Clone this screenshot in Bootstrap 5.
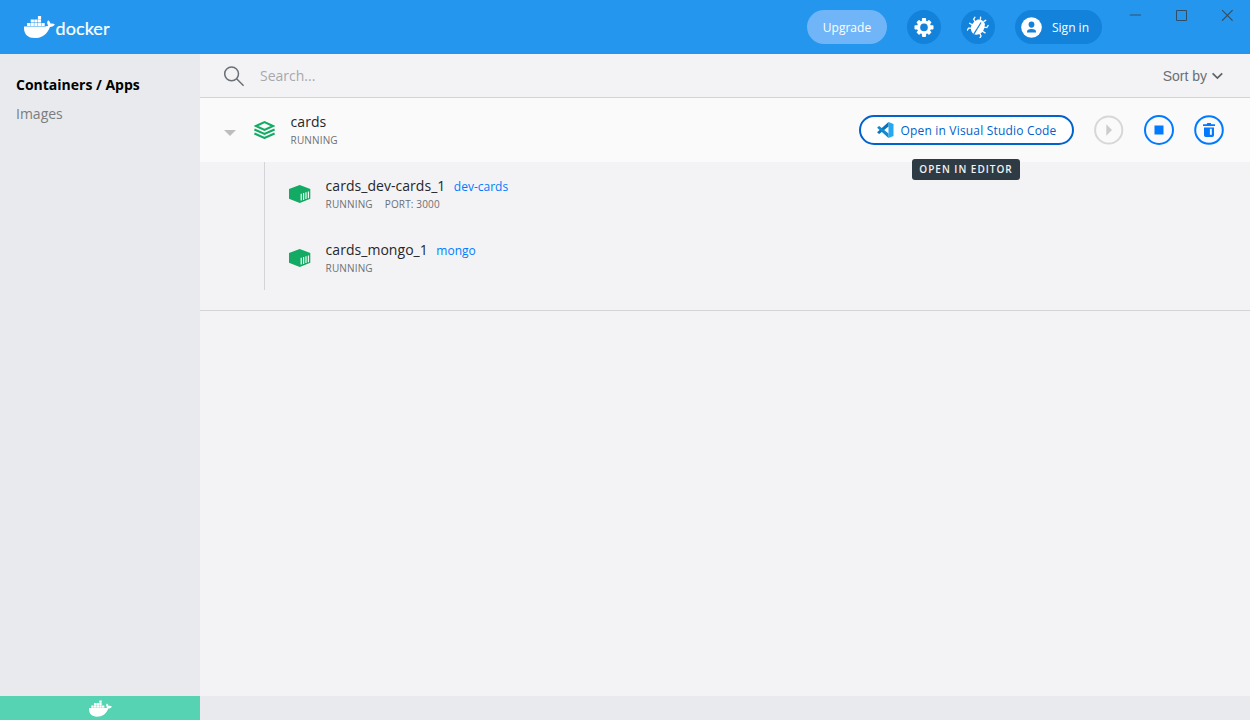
<!DOCTYPE html>
<html lang="en">
<head>
<meta charset="utf-8">
<meta name="viewport" content="width=device-width, initial-scale=1">
<title>Docker Dashboard</title>
<link href="https://cdn.jsdelivr.net/npm/bootstrap@5.3.0/dist/css/bootstrap.min.css" rel="stylesheet">
<style>
body{font-family:"Open Sans",sans-serif;font-size:14px;line-height:20px;background:#f3f3f6;color:#1c1e21;overflow:hidden}
svg{display:block;flex:none}
a{text-decoration:none}
.topbar{height:54px;background:#2496ed;padding:0 17px 0 24px}
.tools{gap:20px}
.pill{height:34px;border:0;border-radius:17px;background:#1282db;color:#fff;font-size:12px;font-weight:500;padding:1px 0 0;line-height:18px}
.pill.upgrade{width:80px;background:#70b5f8}
.pill.round{width:34px;padding:0}
.pill.signin{width:87px;padding:0 0 0 6px;gap:10px}
.pill.signin span{padding-top:1px}
.win{gap:34px;margin-left:27px;padding-top:9px}
.side{width:200px;background:#e8eaee}
.side nav{padding:21px 16px}
.side nav a{color:#7a7d80;line-height:20px;margin-bottom:9px}
.side nav a.active{color:#000;font-weight:700}
.searchbar{height:44px;border-bottom:1px solid #d3d4d7;padding:0 27px 0 23px}
.searchbar .lens{margin:1px 0 0 1px}
.searchbar input{border:0;background:none;padding:0;outline:0;width:300px;font-size:14px;margin-left:15px}
.searchbar input::placeholder{color:#a6a8ab;opacity:1}
.sort{font-family:"Liberation Sans",sans-serif;color:#6b6f73;gap:5px}
.group{border-bottom:1px solid #d3d4d7;padding-bottom:20px}
.ghead{height:64px;background:#fafafa;padding:0 26px 0 24px}
.ghead .caret{margin-top:5px}
.ghead .layers{margin-left:18px}
.ghead .names{margin:0 0 2px 15.6px}
.actions{gap:20px}
.ttl{font-size:14px;line-height:20px;color:#25272a;letter-spacing:.04px}
.sub{font-size:10px;line-height:14px;color:#6c7074;letter-spacing:.15px;gap:12px}
.ghead .sub{margin-top:1px}
.kids{margin-left:64px;border-left:1px solid #d3d4d7}
.kid{height:64px;padding-left:24px}
.kid .names{margin:0 0 2px 14.6px}
.kid a{font-size:12px;letter-spacing:0;color:#007bff;margin-left:8.5px}
.vsc{width:215px;height:30px;border:2px solid #0062cc;border-radius:15px;background:#fff;color:#0062cc;font-size:12px;font-weight:500;letter-spacing:.18px;padding:0;gap:7px}
.vsc span{padding-top:1px}
.tip{position:absolute;top:44px;left:53px;width:108px;height:21px;border-radius:3px;background:#2f3b44;color:#f2f3f4;font-size:10px;font-weight:600;letter-spacing:1px;line-height:21px;text-align:center;white-space:nowrap}
.foot{height:24px;background:#e8eaed}
.foot div{width:200px;background:#56d3b2}
</style>
</head>
<body class="vh-100 d-flex flex-column">
<svg width="0" height="0" class="position-absolute">
  <symbol id="whale" viewBox="0 0 31 22">
    <path d="M0 10.4H21.5C22.8 10.4 23.8 10 24.3 9.5C22.7 7.6 22.9 5.6 24.1 4.2C25.5 5.1 26.3 6.4 26.4 7.6C28 7.2 29.6 7.5 30.8 8.2C30 10.1 28.2 10.9 26 10.9C23.3 18.2 18 22 10.5 22C3.3 22 -.4 17.8 0 10.4Z"/>
    <path d="M3.1 7h3.2v3h-3.2zM6.7 7h3.2v3h-3.2zM10.3 7h3.2v3h-3.2zM13.9 7h3.2v3h-3.2zM17.5 7h3.2v3h-3.2zM6.7 3.6h3.2v3h-3.2zM10.3 3.6h3.2v3h-3.2zM13.9 3.6h3.2v3h-3.2zM13.9 .1h3.2v3.1h-3.2z"/>
  </symbol>
  <symbol id="box" viewBox="0 0 22 18">
    <path fill="#13aa63" d="M10.7 0L21.3 4V13.8L10.7 18L0 13.8V4Z"/>
    <path fill="none" stroke="#eefaf4" stroke-width="1.2" d="M12.2 8.7V15.6M14.6 8V14.9M17 7.2V14.1M19.4 6.4V13.3"/>
  </symbol>
</svg>

<header class="topbar d-flex flex-shrink-0 align-items-center">
  <svg width="88" height="24" viewBox="0 0 88 24" fill="#fff">
    <use href="#whale" x="0" y="1" width="31" height="22"/>
    <text x="31.5" y="20.3" font-family="Lato" font-size="18" textLength="54" stroke="#fff" stroke-width=".2">docker</text>
  </svg>
  <div class="tools d-flex align-items-center ms-auto">
    <button class="pill upgrade">Upgrade</button>
    <button class="pill round d-flex align-items-center justify-content-center" aria-label="Settings">
      <svg width="20" height="20" viewBox="-10 -10.4 20 20" fill="#fff">
        <g id="teeth"><rect x="-2.1" y="-9.5" width="4.2" height="19" rx=".8"/><rect x="-9.5" y="-2.1" width="19" height="4.2" rx=".8"/></g>
        <use href="#teeth" transform="rotate(45) scale(.94)"/>
        <circle r="7"/><circle r="3.8" fill="#1282db"/>
      </svg>
    </button>
    <button class="pill round d-flex align-items-center justify-content-center" aria-label="Troubleshoot">
      <svg width="22" height="22" viewBox="-11 -11 22 22">
        <g transform="rotate(32)">
          <path d="M-4.3-6.2Q0-9.6 4.3-6.2Q6.8-2 6.5 1.5Q5.7 7 0 8.6Q-5.7 7-6.5 1.5Q-6.8-2-4.3-6.2Z" fill="#fff"/>
          <path d="M.2-5.4V8.8" stroke="#1282db" stroke-width="1.2"/>
          <path d="M-5-3L-7.8-4.2V-7.2M-5.5 1.2H-9.6M-5 4.5L-7.4 6V8.8M5-3L7.8-4.2V-7.2M5.5 1.2H9.6M5 4.5L7.4 6V8.8M-1.8-7.5L-3.3-10.2M1.8-7.5L3.3-10.2" fill="none" stroke="#fff" stroke-width="1.3"/>
        </g>
      </svg>
    </button>
    <button class="pill signin d-flex align-items-center">
      <svg width="21" height="21" viewBox="0 0 21 21"><circle cx="10.5" cy="10.5" r="10.3" fill="#fff"/><ellipse cx="10.5" cy="7.6" rx="2.9" ry="3.1" fill="#1282db"/><path d="M6 15.5V14.7Q6 12 10.5 12T15 14.7V15.5Z" fill="#1282db"/></svg>
      <span>Sign in</span>
    </button>
  </div>
  <div class="win d-flex align-self-start">
    <svg width="12" height="12" fill="none" stroke="#2b6c9f" stroke-width="1.6"><path d="M.8 6H12"/></svg>
    <svg width="12" height="12" fill="none" stroke="#304f66"><path d="M1.5 1.5h10v10h-10z"/></svg>
    <svg width="12" height="12" fill="none" stroke="#304f66" stroke-width="1.1"><path d="M1.1 1.2L11.6 11.7M11.6 1.2L1.1 11.7"/></svg>
  </div>
</header>

<div class="d-flex flex-grow-1">
  <aside class="side">
    <nav class="nav flex-column"><a class="active" href="#">Containers / Apps</a><a href="#">Images</a></nav>
  </aside>
  <main class="flex-grow-1">
    <div class="searchbar d-flex align-items-center">
      <svg class="lens" width="21" height="21" viewBox="0 0 21 21" fill="none" stroke="#6b7075" stroke-width="1.5"><circle cx="7.6" cy="7.8" r="6.9"/><path d="M12.6 12.8L19.6 19.8"/></svg>
      <input type="text" placeholder="Search..." aria-label="Search">
      <div class="sort d-flex align-items-center ms-auto">Sort by
        <svg width="11" height="8" fill="none" stroke="#5d6266" stroke-width="1.7"><path d="M.6 1.3L5.4 6.1L10.2 1.3"/></svg>
      </div>
    </div>
    <section class="group">
      <div class="ghead d-flex align-items-center">
        <svg class="caret" width="12" height="6" viewBox="0 0 12 6"><path d="M0 0H12L6 6Z" fill="#bcbdbf"/></svg>
        <svg class="layers" width="21" height="18" viewBox="0 0 21 18" fill="none" stroke="#13aa63" stroke-width="2"><path d="M2 5L10.5 1.2L19 5L10.5 8.8Z"/><path d="M.4 8.5L10.5 13L20.6 8.5M.4 12.5L10.5 17L20.6 12.5"/></svg>
        <div class="names"><div class="ttl">cards</div><div class="sub">RUNNING</div></div>
        <div class="actions d-flex align-items-center ms-auto">
          <div class="position-relative">
            <button class="vsc d-flex align-items-center justify-content-center">
              <svg width="17" height="16" viewBox="0 0 17 16"><path d="M11.5 0L16.5 2V14L11.5 16Z" fill="#25a9f2"/><path d="M11.5 0V4.5L2.2 12L.4 10.8V10Z" fill="#0b74b9"/><path d="M.4 5.2L2.2 4L11.5 11.5V16L.4 6Z" fill="#1389cf"/></svg>
              <span>Open in Visual Studio Code</span>
            </button>
            <div class="tip">OPEN IN EDITOR</div>
          </div>
          <svg width="30" height="30" viewBox="0 0 30 30"><circle cx="14.7" cy="15" r="13.6" fill="none" stroke="#d7d7d8" stroke-width="2"/><path d="M12.3 9.3L18 15L12.3 20.7Z" fill="#ccccce"/></svg>
          <svg width="30" height="30" viewBox="0 0 30 30"><circle cx="15" cy="15" r="14" fill="none" stroke="#007bff" stroke-width="2"/><path d="M10.5 10.5h9v9h-9z" fill="#007bff"/></svg>
          <svg width="30" height="30" viewBox="0 0 30 30"><circle cx="15" cy="15" r="13.8" fill="none" stroke="#007bff" stroke-width="2"/><path fill="#007bff" fill-rule="evenodd" d="M9 9.2H12.7L13.3 8H16.7L17.3 9.2H21V11H9ZM10 12.4H20V20.3Q20 22 18.3 22H11.7Q10 22 10 20.3ZM15.9 13.7V19.8H17.8V13.7Z"/></svg>
        </div>
      </div>
      <div class="kids">
        <div class="kid d-flex align-items-center">
          <svg width="22" height="18"><use href="#box"/></svg>
          <div class="names"><div class="ttl">cards_dev-cards_1<a href="#">dev-cards</a></div><div class="sub d-flex"><span>RUNNING</span><span>PORT: 3000</span></div></div>
        </div>
        <div class="kid d-flex align-items-center">
          <svg width="22" height="18"><use href="#box"/></svg>
          <div class="names"><div class="ttl">cards_mongo_1<a href="#">mongo</a></div><div class="sub">RUNNING</div></div>
        </div>
      </div>
    </section>
  </main>
</div>
<footer class="foot d-flex flex-shrink-0">
  <div class="d-flex align-items-center justify-content-center"><svg width="23" height="17" fill="#fff"><use href="#whale"/></svg></div>
</footer>
<script src="https://cdn.jsdelivr.net/npm/bootstrap@5.3.0/dist/js/bootstrap.bundle.min.js"></script>
</body>
</html>
